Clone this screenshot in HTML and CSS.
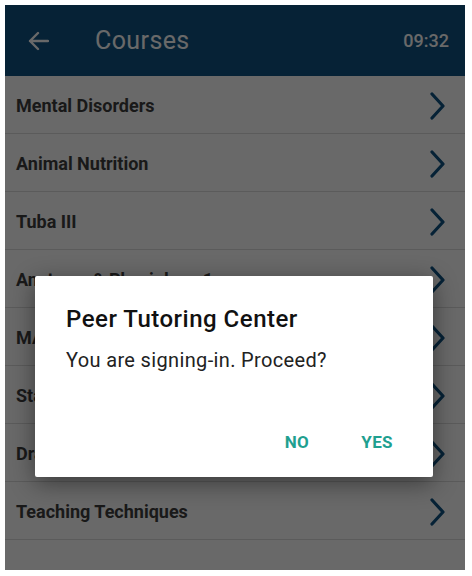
FILE: index.html
```html
<!DOCTYPE html>
<html>
<head>
<meta charset="utf-8">
<link rel="stylesheet" href="styles.css">
</head>
<body>
<div class="app">
  <header class="topbar">
    <svg class="back" width="22" height="20" viewBox="0 0 22 20"><path d="M21 10H3M11 2L3 10l8 8" fill="none" stroke="#fff" stroke-width="2.4" stroke-linecap="round" stroke-linejoin="round"/></svg>
    <span class="title">Courses</span>
    <span class="time">09:32</span>
  </header>
  <ul class="list">
    <li class="row"><span>Mental Disorders</span><svg class="chev" width="16" height="30" viewBox="0 0 16 30"><path d="M3 3l11 12L3 27" fill="none" stroke="#0f5384" stroke-width="3.2" stroke-linecap="round" stroke-linejoin="round"/></svg></li>
    <li class="row"><span>Animal Nutrition</span><svg class="chev" width="16" height="30" viewBox="0 0 16 30"><path d="M3 3l11 12L3 27" fill="none" stroke="#0f5384" stroke-width="3.2" stroke-linecap="round" stroke-linejoin="round"/></svg></li>
    <li class="row"><span>Tuba III</span><svg class="chev" width="16" height="30" viewBox="0 0 16 30"><path d="M3 3l11 12L3 27" fill="none" stroke="#0f5384" stroke-width="3.2" stroke-linecap="round" stroke-linejoin="round"/></svg></li>
    <li class="row"><span>Anatomy &amp; Physiology 1</span><svg class="chev" width="16" height="30" viewBox="0 0 16 30"><path d="M3 3l11 12L3 27" fill="none" stroke="#0f5384" stroke-width="3.2" stroke-linecap="round" stroke-linejoin="round"/></svg></li>
    <li class="row"><span>MATH 101</span><svg class="chev" width="16" height="30" viewBox="0 0 16 30"><path d="M3 3l11 12L3 27" fill="none" stroke="#0f5384" stroke-width="3.2" stroke-linecap="round" stroke-linejoin="round"/></svg></li>
    <li class="row"><span>Statistics</span><svg class="chev" width="16" height="30" viewBox="0 0 16 30"><path d="M3 3l11 12L3 27" fill="none" stroke="#0f5384" stroke-width="3.2" stroke-linecap="round" stroke-linejoin="round"/></svg></li>
    <li class="row"><span>Drawing I</span><svg class="chev" width="16" height="30" viewBox="0 0 16 30"><path d="M3 3l11 12L3 27" fill="none" stroke="#0f5384" stroke-width="3.2" stroke-linecap="round" stroke-linejoin="round"/></svg></li>
    <li class="row"><span>Teaching Techniques</span><svg class="chev" width="16" height="30" viewBox="0 0 16 30"><path d="M3 3l11 12L3 27" fill="none" stroke="#0f5384" stroke-width="3.2" stroke-linecap="round" stroke-linejoin="round"/></svg></li>
  </ul>
  <div class="scrim"></div>
  <div class="dialog">
    <div class="dlg-title">Peer Tutoring Center</div>
    <div class="dlg-msg">You are signing-in. Proceed?</div>
    <div class="dlg-actions">
      <span class="btn">NO</span>
      <span class="btn">YES</span>
    </div>
  </div>
</div>
</body>
</html>
```

FILE: styles.css
```css
* { box-sizing: border-box; }
html, body { margin: 0; padding: 0; background: #fff; }
body { padding: 5px 7px 6px 5px; font-family: Roboto, "Liberation Sans", sans-serif; }
.app {
  position: relative;
  width: 460px;
  height: 565px;
  background: #fff;
  overflow: hidden;
}
.topbar {
  height: 71px;
  background: #0f5384;
  display: flex;
  align-items: center;
  color: #fff;
  padding: 0 16px 0 22px;
}
.back { flex: none; }
.title {
  font-size: 25px;
  letter-spacing: 0.4px;
  margin-left: 46px;
  flex: 1;
}
.time {
  font-size: 18px;
  font-weight: 500;
}
.list { list-style: none; margin: 0; padding: 0; }
.row {
  height: 58px;
  border-bottom: 1px solid #dcdcdc;
  display: flex;
  align-items: center;
  justify-content: space-between;
  padding: 2px 20px 0 11px;
  font-size: 18px;
  font-weight: 700;
  color: #3e3e3e;
}
.scrim {
  position: absolute;
  inset: 0;
  background: rgba(0, 0, 0, 0.59);
}
.dialog {
  position: absolute;
  left: 30px;
  top: 271px;
  width: 398px;
  height: 201px;
  background: #fff;
  border-radius: 2px;
  box-shadow: 0 6px 24px rgba(0, 0, 0, 0.45);
  display: flex;
  flex-direction: column;
  padding: 29px 0 15px 31px;
}
.dlg-title {
  font-size: 24px;
  font-weight: 500;
  letter-spacing: 0.5px;
  line-height: 28px;
  color: #111;
}
.dlg-msg {
  margin-top: 15px;
  font-size: 20px;
  line-height: 24px;
  letter-spacing: 0.35px;
  color: #222;
}
.dlg-actions {
  margin-top: auto;
  display: flex;
  justify-content: flex-end;
  gap: 52px;
  padding-right: 40px;
}
.btn {
  font-size: 17px;
  font-weight: 700;
  line-height: 20px;
  padding: 10px 0;
  color: #1fa090;
  letter-spacing: 0.4px;
}
```
